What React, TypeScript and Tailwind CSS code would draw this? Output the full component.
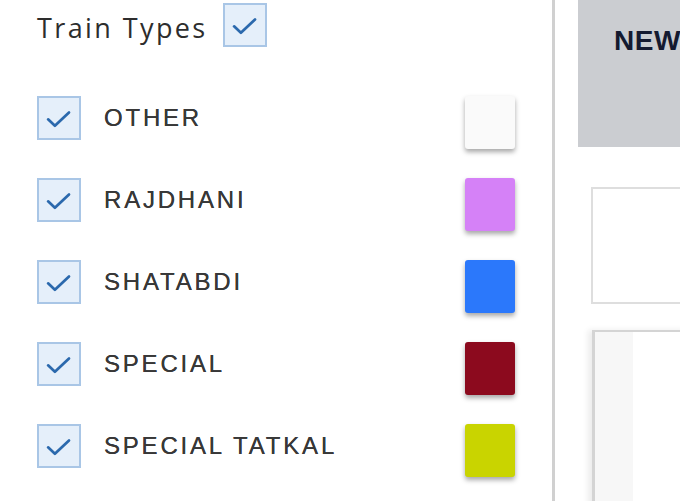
const types = [
  { name: "OTHER", color: "bg-[#fafafa]" },
  { name: "RAJDHANI", color: "bg-[#d581f7]" },
  { name: "SHATABDI", color: "bg-[#2b78fb]" },
  { name: "SPECIAL", color: "bg-[#8c0a1e]" },
  { name: "SPECIAL TATKAL", color: "bg-[#c9d400]" },
];

function Box() {
  return (
    <div className="flex h-[44px] w-[44px] shrink-0 items-center justify-center border-2 border-[#a9c6e6] bg-[#e5effa]">
      <svg width="44" height="44" viewBox="0 0 44 44" fill="none">
        <path
          d="M10 23.5 L17.5 30.5 L33 16"
          stroke="#2b69ad"
          strokeWidth="3"
          strokeLinecap="round"
          strokeLinejoin="round"
        />
      </svg>
    </div>
  );
}

export default function App() {
  return (
    <div className="flex h-[501px] w-[680px] overflow-hidden bg-white">
      <div className="w-[552px] shrink-0 pl-[37px] pr-[37px]">
        <div className="flex h-[48px] items-center gap-[15px] pt-[2px]">
          <span className="pt-[4px] font-['Open_Sans',sans-serif] text-[27px] leading-none tracking-[2.4px] text-[#2d2d2d]">
            Train Types
          </span>
          <Box />
        </div>

        <div className="mt-[29px] flex flex-col">
          {types.map((t) => (
            <div key={t.name} className="flex h-[82px] items-center">
              <Box />
              <span className="ml-[23px] flex-1 font-['Liberation_Sans',Arial,sans-serif] text-[24px] leading-none tracking-[2.8px] text-[#383838] [text-shadow:0_0_0.4px_#383838]">
                {t.name}
              </span>
              <div
                className={`mt-[8px] h-[53px] w-[50px] rounded-[3px] shadow-[0_3px_5px_rgba(0,0,0,0.35)] ${t.color}`}
              />
            </div>
          ))}
        </div>
      </div>

      <div className="w-[3px] shrink-0 bg-[#d0d0d0]" />

      <div className="flex min-w-0 flex-1 flex-col pl-[23px]">
        <div className="h-[147px] w-[200px] shrink-0 overflow-hidden bg-[#cbcdd1] pl-[36px] pt-[27px]">
          <span className="whitespace-nowrap font-['Liberation_Sans',Arial,sans-serif] text-[28px] font-bold leading-none tracking-[0.5px] text-[#141a30]">
            NEWS
          </span>
        </div>
        <div className="ml-[13px] mt-[40px] h-[117px] w-[200px] shrink-0 border-2 border-[#dedede] bg-white" />
        <div className="ml-[14px] mt-[26px] flex h-[200px] w-[200px] shrink-0 border-l-[3px] border-t-2 border-[#d4d4d4] shadow-[-4px_0_6px_rgba(0,0,0,0.08)]">
          <div className="w-[38px] bg-[#f7f7f7]" />
          <div className="flex-1 bg-white" />
        </div>
      </div>
    </div>
  );
}
